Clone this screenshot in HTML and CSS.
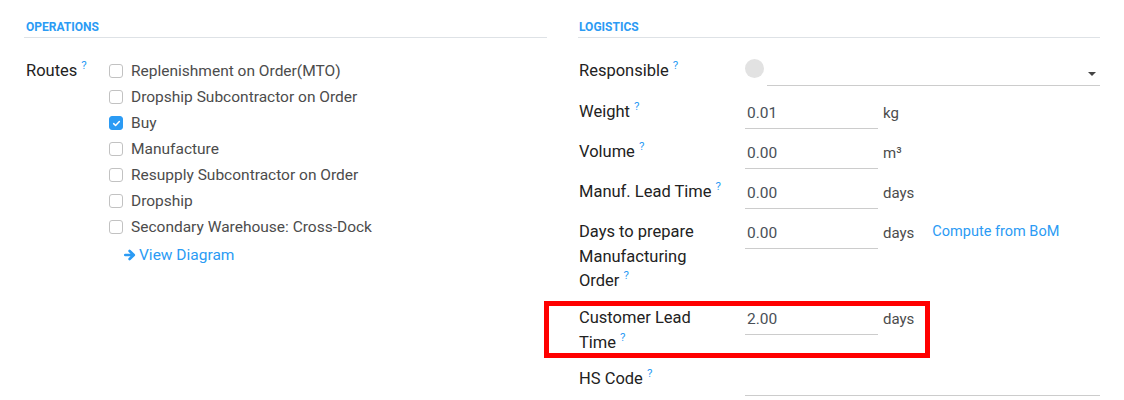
FILE: index.html
```html
<!DOCTYPE html>
<html>
<head>
<meta charset="utf-8">
<link rel="stylesheet" href="styles.css">
</head>
<body>
<div class="page">
  <section class="group">
    <h3 class="group-title">Operations</h3>
    <div class="routes-row">
      <div class="label">Routes<sup class="help">?</sup></div>
      <div class="routes">
        <label class="check"><span class="box"></span>Replenishment on Order(MTO)</label>
        <label class="check"><span class="box"></span>Dropship Subcontractor on Order</label>
        <label class="check"><span class="box checked"><svg viewBox="0 0 12 12" width="9" height="9"><path d="M2.2 6.2 L4.8 8.6 L9.8 3.4" fill="none" stroke="#fff" stroke-width="2" stroke-linecap="round" stroke-linejoin="round"/></svg></span>Buy</label>
        <label class="check"><span class="box"></span>Manufacture</label>
        <label class="check"><span class="box"></span>Resupply Subcontractor on Order</label>
        <label class="check"><span class="box"></span>Dropship</label>
        <label class="check"><span class="box"></span>Secondary Warehouse: Cross-Dock</label>
        <a class="diagram"><svg viewBox="0 0 12 12" width="12" height="12"><path d="M1.2 6 H9.2 M5.6 2 L9.8 6 L5.6 10" fill="none" stroke="#2b9bf4" stroke-width="2.6" stroke-linecap="round" stroke-linejoin="round"/></svg>View Diagram</a>
      </div>
    </div>
  </section>
  <section class="group">
    <h3 class="group-title">Logistics</h3>
    <div class="form">
      <div class="row r-resp">
        <div class="label">Responsible<sup class="help">?</sup></div>
        <div class="field">
          <span class="avatar"></span>
          <span class="select"><span class="caret"></span></span>
        </div>
      </div>
      <div class="row">
        <div class="label">Weight<sup class="help">?</sup></div>
        <div class="field"><span class="input">0.01</span><span class="unit">kg</span></div>
      </div>
      <div class="row">
        <div class="label">Volume<sup class="help">?</sup></div>
        <div class="field"><span class="input">0.00</span><span class="unit">m³</span></div>
      </div>
      <div class="row">
        <div class="label">Manuf. Lead Time<sup class="help">?</sup></div>
        <div class="field"><span class="input">0.00</span><span class="unit">days</span></div>
      </div>
      <div class="row r-days">
        <div class="label">Days to prepare Manufacturing Order<sup class="help">?</sup></div>
        <div class="field"><span class="input">0.00</span><span class="unit">days</span><a class="compute">Compute from BoM</a></div>
      </div>
      <div class="row highlight">
        <div class="label">Customer Lead Time<sup class="help">?</sup></div>
        <div class="field"><span class="input">2.00</span><span class="unit">days</span></div>
      </div>
      <div class="row r-hs">
        <div class="label">HS Code<sup class="help">?</sup></div>
        <div class="field"><span class="input wide"></span></div>
      </div>
    </div>
  </section>
</div>
</body>
</html>
```
FILE: styles.css
```css
*, *::before, *::after { box-sizing: border-box; }
html, body { margin: 0; padding: 0; background: #fff; }
body {
  font-family: Roboto, "Liberation Sans", sans-serif;
  font-size: 15.5px;
  color: #212529;
}
.page {
  display: grid;
  grid-template-columns: 523px 522px;
  column-gap: 31px;
  padding: 19px 24px 0 24px;
}
.group-title {
  margin: 0;
  padding: 0 0 2px 2px;
  font-size: 12px;
  font-weight: 700;
  text-transform: uppercase;
  color: #2b9bf4;
  line-height: 16px;
  border-bottom: 1px solid #dee2e6;
}
.group + .group .group-title { padding-left: 1px; }
.help {
  color: #2b9bf4;
  font-size: 11.5px;
  margin-left: 4px;
  vertical-align: 7px;
  line-height: 0;
}
.label {
  padding-left: 2px;
  line-height: 24.5px;
  font-size: 16.5px;
  color: #222;
}
.routes-row {
  display: grid;
  grid-template-columns: 85px 1fr;
  margin-top: 21px;
}
.routes { display: flex; flex-direction: column; }
.check {
  display: flex;
  align-items: center;
  height: 26px;
  color: #4c4c4c;
}
.check:first-child { margin-top: -1px; }
.box {
  width: 14px;
  height: 14px;
  border: 1px solid #c2c2c2;
  border-radius: 3px;
  margin-right: 8px;
  display: inline-flex;
  align-items: center;
  justify-content: center;
}
.box.checked { background: #2b9bf4; border-color: #2b9bf4; }
.diagram {
  display: flex;
  align-items: center;
  gap: 3px;
  color: #2b9bf4;
  margin-left: 15px;
  height: 28px;
  margin-top: 1px;
}
.form { display: flex; flex-direction: column; margin-top: 21px; }
.row {
  display: grid;
  grid-template-columns: 167px 1fr;
  min-height: 40px;
  position: relative;
}
.row .label { width: 145px; padding-left: 1px; }
.row.r-resp { min-height: 41px; }
.field { display: flex; align-items: flex-start; }
.input {
  width: 133px;
  height: 29px;
  border-bottom: 1px solid #ccc;
  padding: 0 0 0 2px;
  color: #495057;
  line-height: 26px;
}
.input.wide { flex: 1; }
.unit { margin-left: 5px; color: #4c4c4c; line-height: 26px; font-size: 15px; }
.compute { margin-left: 18px; color: #2b9bf4; line-height: 24px; font-size: 14.5px; }
.avatar {
  width: 19px;
  height: 19px;
  border-radius: 50%;
  background: #e2e2e2;
  margin-top: 0;
}
.select {
  flex: 1;
  height: 27px;
  margin-left: 3px;
  border-bottom: 1px solid #ccc;
  position: relative;
}
.caret {
  position: absolute;
  right: 4px;
  top: 13px;
  border-left: 4px solid transparent;
  border-right: 4px solid transparent;
  border-top: 4px solid #444;
}
.row.r-days { min-height: 86px; }
.row.highlight { min-height: 61px; }
.row.highlight::before {
  content: "";
  position: absolute;
  left: -34px;
  top: -5px;
  width: 386px;
  height: 57px;
  border: 5px solid #ff0000;
  pointer-events: none;
}
```
